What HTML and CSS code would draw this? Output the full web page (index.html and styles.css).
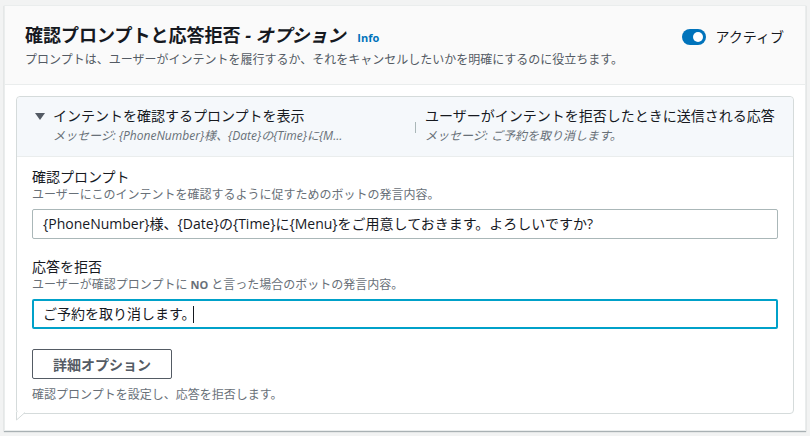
FILE: index.html
```html
<!DOCTYPE html>
<html lang="ja">
<head>
<meta charset="utf-8">
<title>確認プロンプトと応答拒否</title>
<link rel="stylesheet" href="styles.css">
</head>
<body>
<section class="card">
  <header class="card-header">
    <div class="head-text">
      <h2 class="title">確認プロンプトと応答拒否 <i class="optional">- オプション</i> <a class="info" href="#">Info</a></h2>
      <p class="subtitle">プロンプトは、ユーザーがインテントを履行するか、それをキャンセルしたいかを明確にするのに役立ちます。</p>
    </div>
    <label class="toggle">
      <span class="switch"><span class="knob"></span></span>
      <span class="toggle-label">アクティブ</span>
    </label>
  </header>
  <div class="card-body">
    <div class="tabs">
      <div class="tab-header">
        <div class="tab tab-first">
          <svg class="caret" width="10" height="8" viewBox="0 0 10 8"><polygon points="0,0 10,0 5,7" fill="#545b64"/></svg>
          <div class="tab-text">
            <div class="tab-title">インテントを確認するプロンプトを表示</div>
            <div class="tab-sub truncate">メッセージ: {PhoneNumber}様、{Date}の{Time}に{Menu}をご用意しておきます。</div>
          </div>
        </div>
        <div class="divider"></div>
        <div class="tab tab-second">
          <div class="tab-text">
            <div class="tab-title">ユーザーがインテントを拒否したときに送信される応答</div>
            <div class="tab-sub">メッセージ: ご予約を取り消します。</div>
          </div>
        </div>
      </div>
      <div class="tab-content">
        <div class="field">
          <div class="label">確認プロンプト</div>
          <div class="desc">ユーザーにこのインテントを確認するように促すためのボットの発言内容。</div>
          <div class="input">{PhoneNumber}様、{Date}の{Time}に{Menu}をご用意しておきます。よろしいですか?</div>
        </div>
        <div class="field field-2">
          <div class="label">応答を拒否</div>
          <div class="desc">ユーザーが確認プロンプトに <span class="no">NO</span> と言った場合のボットの発言内容。</div>
          <div class="input input-focus">ご予約を取り消します。<span class="caret-line"></span></div>
        </div>
        <button class="btn" type="button">詳細オプション</button>
        <p class="foot">確認プロンプトを設定し、応答を拒否します。</p>
      </div>
      <svg class="notch" width="12" height="9" viewBox="0 0 12 9"><polyline points="0.5,0 0.5,8 9,0.5" fill="#fff" stroke="#d5dbdb" stroke-width="1"/></svg>
    </div>
  </div>
</section>
</body>
</html>
```

FILE: styles.css
```css
* { box-sizing: border-box; }
html, body { margin: 0; }
body {
  background: #f2f3f3;
  padding: 5px 4px 6px 4px;
  font-family: "Open Sans", "Noto Sans CJK JP", sans-serif;
  color: #16191f;
}
.card {
  background: #fff;
  border: 1px solid #eaeded;
  box-shadow: 0 1px 1px 0 rgba(0, 28, 36, 0.3);
  height: 426px;
}
.card-header {
  background: #fafafa;
  border-bottom: 1px solid #eaeded;
  display: flex;
  justify-content: space-between;
  align-items: flex-start;
  padding: 17px 20px 0 20px;
  height: 79px;
}
.title {
  margin: 0;
  font-size: 18px;
  line-height: 24px;
  font-weight: 700;
  color: #16191f;
}
.optional { font-style: italic; }
.info {
  font-size: 11px;
  font-weight: 700;
  color: #0073bb;
  text-decoration: none;
  margin-left: 7px;
  font-style: normal;
}
.subtitle {
  margin: 2px 0 0 0;
  font-size: 12px;
  line-height: 16px;
  color: #545b64;
}
.toggle {
  display: flex;
  align-items: center;
  gap: 10px;
  margin-top: 4px;
  margin-right: 1px;
}
.switch {
  width: 24px;
  height: 16px;
  border-radius: 8px;
  background: #0073bb;
  display: flex;
  align-items: center;
  justify-content: flex-end;
  padding: 0 3px;
}
.knob {
  width: 10px;
  height: 10px;
  border-radius: 50%;
  background: #fff;
}
.toggle-label {
  font-size: 14px;
  line-height: 20px;
  color: #16191f;
}
.card-body {
  padding: 11px 11px 0 11px;
}
.tabs {
  position: relative;
  border: 1px solid #d5dbdb;
  border-radius: 4px;
  height: 318px;
}
.tab-header {
  background: #f5f8fb;
  border-bottom: 1px solid #eaeded;
  border-radius: 4px 4px 0 0;
  height: 60px;
  display: flex;
  align-items: flex-start;
}
.tab {
  display: flex;
  align-items: flex-start;
  padding-top: 9px;
}
.tab-first {
  width: 398px;
  padding-left: 18px;
  gap: 8px;
}
.caret { margin-top: 7px; flex: none; }
.divider {
  width: 1px;
  height: 11px;
  background: #aab7b8;
  margin-top: 25px;
}
.tab-second {
  padding-left: 9px;
}
.tab-title {
  font-size: 14px;
  line-height: 20px;
  color: #16191f;
}
.tab-sub {
  font-size: 12px;
  line-height: 18px;
  font-style: italic;
  color: #687078;
  margin-top: 1px;
}
.truncate {
  max-width: 292px;
  white-space: nowrap;
  overflow: hidden;
  text-overflow: ellipsis;
}
.tab-content {
  padding: 10px 15px 0 15px;
}
.label {
  font-size: 14px;
  line-height: 20px;
  color: #16191f;
}
.desc {
  font-size: 12px;
  line-height: 16px;
  color: #687078;
}
.no { font-weight: 700; font-size: 11px; }
.input {
  margin-top: 6px;
  height: 30px;
  border: 1px solid #aab7b8;
  border-radius: 2px;
  padding: 0 10px;
  font-size: 14px;
  line-height: 28px;
  color: #16191f;
  display: flex;
  align-items: center;
}
.input-focus {
  border: 2px solid #00a1c9;
  padding: 0 9px;
}
.caret-line {
  display: inline-block;
  width: 1px;
  height: 17px;
  background: #16191f;
  margin-left: -3px;
}
.field-2 { margin-top: 18px; }
.btn {
  margin-top: 20px;
  width: 140px;
  height: 30px;
  background: #fff;
  border: 1px solid #545b64;
  border-radius: 2px;
  font-family: inherit;
  font-size: 14px;
  font-weight: 700;
  color: #545b64;
  padding: 0;
}
.foot {
  margin: 8px 0 0 0;
  font-size: 12px;
  line-height: 16px;
  color: #687078;
}
.notch {
  position: absolute;
  left: -1px;
  bottom: -8px;
}
```
